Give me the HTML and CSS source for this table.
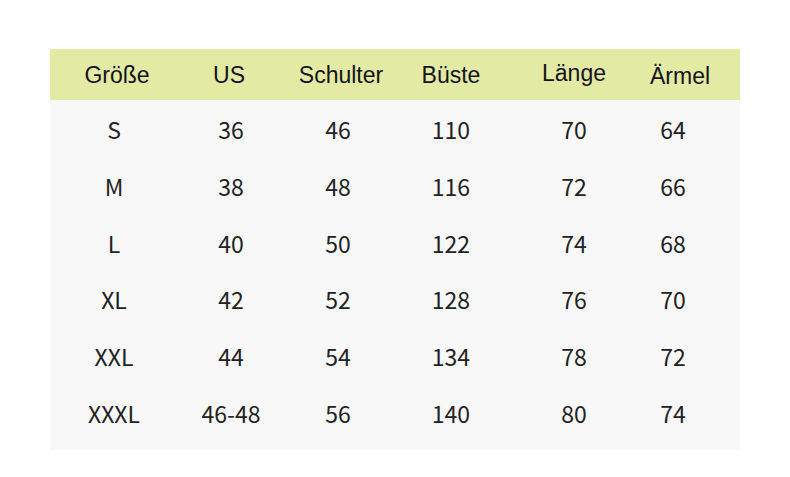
FILE: index.html
```html
<!DOCTYPE html>
<html lang="de">
<head>
<meta charset="utf-8">
<link rel="stylesheet" href="styles.css">
</head>
<body>
<div class="page">
  <div class="table">
    <div class="head">
      <div class="c">Größe</div>
      <div class="c">US</div>
      <div class="c">Schulter</div>
      <div class="c">Büste</div>
      <div class="c up">Länge</div>
      <div class="c down">Ärmel</div>
    </div>
    <div class="body">
      <div class="row"><div class="c">S</div><div class="c">36</div><div class="c">46</div><div class="c">110</div><div class="c">70</div><div class="c">64</div></div>
      <div class="row"><div class="c">M</div><div class="c">38</div><div class="c">48</div><div class="c">116</div><div class="c">72</div><div class="c">66</div></div>
      <div class="row"><div class="c">L</div><div class="c">40</div><div class="c">50</div><div class="c">122</div><div class="c">74</div><div class="c">68</div></div>
      <div class="row"><div class="c">XL</div><div class="c">42</div><div class="c">52</div><div class="c">128</div><div class="c">76</div><div class="c">70</div></div>
      <div class="row"><div class="c">XXL</div><div class="c">44</div><div class="c">54</div><div class="c">134</div><div class="c">78</div><div class="c">72</div></div>
      <div class="row"><div class="c">XXXL</div><div class="c">46-48</div><div class="c">56</div><div class="c">140</div><div class="c">80</div><div class="c">74</div></div>
    </div>
  </div>
</div>
</body>
</html>
```
FILE: styles.css
```css
html, body {
  margin: 0;
  padding: 0;
  background: #ffffff;
}
.page {
  width: 790px;
  height: 477px;
  padding: 49px 50px 0 50px;
  box-sizing: border-box;
}
.table {
  width: 690px;
}
.head {
  height: 51px;
  background: #e2eaa4;
  display: grid;
  grid-template-columns: 134px 90px 134px 86px 160px 52px 34px;
  align-items: center;
  font-family: "Liberation Sans", Arial, sans-serif;
  font-size: 23px;
  color: #141414;
}
.head .c {
  display: flex;
  justify-content: center;
  white-space: nowrap;
  padding-top: 1px;
}
.head .up {
  padding-top: 0;
  padding-bottom: 2px;
}
.head .down {
  padding-top: 3px;
}
.body {
  background: #f8f8f8;
  padding: 1px 0 9px 0;
  font-family: "Noto Sans CJK SC", "Noto Sans", sans-serif;
  font-size: 23px;
  color: #222;
}
.row {
  height: 56.7px;
  display: grid;
  grid-template-columns: 128px 106px 108px 118px 128px 70px;
  align-items: center;
}
.row .c {
  display: flex;
  justify-content: center;
  white-space: nowrap;
}
```
